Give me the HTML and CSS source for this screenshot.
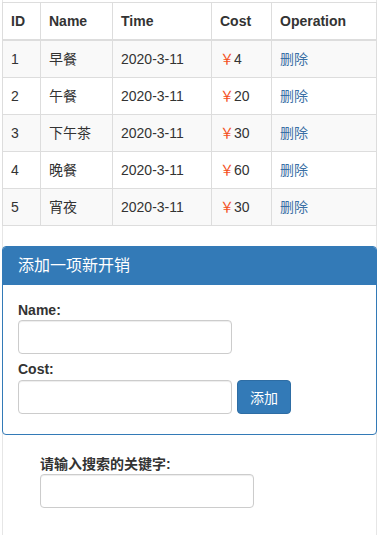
FILE: index.html
```html
<!DOCTYPE html>
<html lang="en">
<head>
    <meta charset="UTF-8">
    <meta name="viewport" content="width=device-width, initial-scale=1.0">
    <title>开销记录</title>
    <link rel="stylesheet" href="styles.css">
</head>
<body>
    <div class="page">
        <table class="cost-table">
            <colgroup>
                <col class="col-id">
                <col class="col-name">
                <col class="col-time">
                <col class="col-cost">
                <col class="col-op">
            </colgroup>
            <thead>
                <tr>
                    <th>ID</th>
                    <th>Name</th>
                    <th>Time</th>
                    <th>Cost</th>
                    <th>Operation</th>
                </tr>
            </thead>
            <tbody>
                <tr>
                    <td>1</td>
                    <td>早餐</td>
                    <td>2020-3-11</td>
                    <td><span class="yen">￥</span>4</td>
                    <td><a href="#" class="del-link">删除</a></td>
                </tr>
                <tr>
                    <td>2</td>
                    <td>午餐</td>
                    <td>2020-3-11</td>
                    <td><span class="yen">￥</span>20</td>
                    <td><a href="#" class="del-link">删除</a></td>
                </tr>
                <tr>
                    <td>3</td>
                    <td>下午茶</td>
                    <td>2020-3-11</td>
                    <td><span class="yen">￥</span>30</td>
                    <td><a href="#" class="del-link">删除</a></td>
                </tr>
                <tr>
                    <td>4</td>
                    <td>晚餐</td>
                    <td>2020-3-11</td>
                    <td><span class="yen">￥</span>60</td>
                    <td><a href="#" class="del-link">删除</a></td>
                </tr>
                <tr>
                    <td>5</td>
                    <td>宵夜</td>
                    <td>2020-3-11</td>
                    <td><span class="yen">￥</span>30</td>
                    <td><a href="#" class="del-link">删除</a></td>
                </tr>
            </tbody>
        </table>

        <div class="panel">
            <div class="panel-heading">添加一项新开销</div>
            <div class="panel-body">
                <label class="field-label" for="costName">Name:</label>
                <input type="text" id="costName" class="field-input">
                <label class="field-label label-cost" for="costValue">Cost:</label>
                <div class="cost-row">
                    <input type="text" id="costValue" class="field-input">
                    <button class="add-btn">添加</button>
                </div>
            </div>
        </div>

        <div class="search-box">
            <label class="field-label" for="keyword">请输入搜索的关键字:</label>
            <input type="text" id="keyword" class="field-input">
        </div>
    </div>
</body>
</html>
```

FILE: styles.css
```css
* {
    margin: 0;
    padding: 0;
    box-sizing: border-box;
}

body {
    font-family: "Liberation Sans", "Noto Sans CJK SC", sans-serif;
    font-size: 14px;
    line-height: 20px;
    color: #333;
    background: #fff;
}

.page {
    margin: 0 3px 0 2px;
    padding-top: 2px;
    min-height: 535px;
    border-left: 1px solid #e6e6e6;
    border-right: 1px solid #e6e6e6;
}

.cost-table {
    width: calc(100% + 2px);
    margin: 0 -1px 20px;
    border-collapse: collapse;
    table-layout: fixed;
    border: 1px solid #ddd;
}

.col-id { width: 38px; }
.col-name { width: 72px; }
.col-time { width: 99px; }
.col-cost { width: 60px; }
.col-op { width: auto; }

.cost-table th,
.cost-table td {
    padding: 8px;
    border: 1px solid #ddd;
    text-align: left;
    white-space: nowrap;
}

.cost-table th {
    font-weight: bold;
    border-bottom-width: 2px;
}

.cost-table tbody tr:nth-child(odd) {
    background: #f9f9f9;
}

.yen {
    color: #f4511e;
}

.del-link {
    color: #3a6fa5;
    text-decoration: none;
}

.panel {
    margin: 0 -1px 19px;
    border: 1px solid #337ab7;
    border-radius: 4px;
    background: #fff;
}

.panel-heading {
    background: #337ab7;
    color: #fff;
    font-size: 16px;
    line-height: 18px;
    padding: 10px 15px;
    border-radius: 3px 3px 0 0;
}

.panel-body {
    padding: 15px 15px 20px;
}

.field-label {
    display: block;
    font-weight: bold;
}

.label-cost {
    margin-top: 5px;
}

.field-input {
    display: block;
    width: 214px;
    height: 34px;
    padding: 6px 12px;
    font-size: 14px;
    border: 1px solid #ccc;
    border-radius: 4px;
    box-shadow: inset 0 1px 1px rgba(0, 0, 0, 0.075);
    background: #fff;
}

.cost-row {
    display: flex;
    align-items: center;
    gap: 5px;
}

.add-btn {
    height: 34px;
    margin-top: 1px;
    padding: 6px 12px;
    font-family: inherit;
    font-size: 14px;
    color: #fff;
    background: #337ab7;
    border: 1px solid #2e6da4;
    border-radius: 4px;
    cursor: pointer;
}

.search-box {
    padding: 0 37px;
}
```
